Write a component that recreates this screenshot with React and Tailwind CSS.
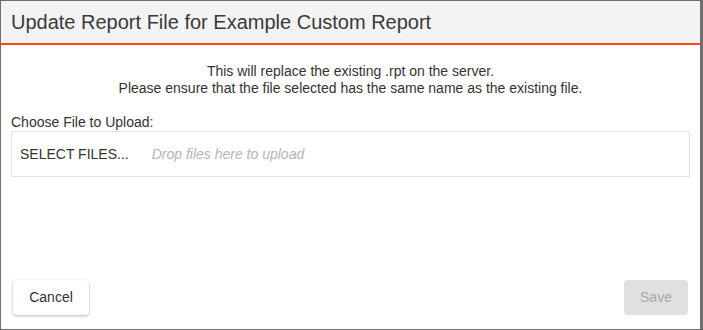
import React from "react";

export default function App() {
  return (
    <div className="h-[330px] w-[703px] bg-[#6f6f6f] pl-px pt-px font-['Liberation_Sans',Arial,sans-serif]">
      <div className="flex h-[328px] w-[699px] flex-col bg-white text-[#333]">
        {/* header */}
        <div className="flex h-[44px] items-center border-b-2 border-[#ff4a0c] bg-[#f3f3f3] px-[10px]">
          <h1 className="text-[20px] leading-none text-[#3a3a3a]">Update Report File for Example Custom Report</h1>
        </div>

        {/* body */}
        <div className="flex flex-1 flex-col px-[10px]">
          <div className="mt-[18px] text-center text-[14px] leading-[17px] text-[#333]">
            <p>This will replace the existing .rpt on the server.</p>
            <p>Please ensure that the file selected has the same name as the existing file.</p>
          </div>
          <label className="mt-[17px] text-[14px] leading-[17px] text-[#333]">Choose File to Upload:</label>
          <div className="flex h-[46px] items-center border border-[#e2e2e2] px-[8px]">
            <span className="text-[14px] text-[#333]">SELECT FILES...</span>
            <span className="ml-[23px] text-[14px] italic text-[#b5b5b5]">Drop files here to upload</span>
          </div>
        </div>

        {/* footer */}
        <div className="flex items-center justify-between px-[12px] pb-[14px]">
          <button className="h-[35px] w-[76px] rounded-[4px] bg-white text-[14px] text-[#333] shadow-[0_1px_3px_rgba(0,0,0,0.3)]">
            Cancel
          </button>
          <button disabled className="h-[35px] w-[64px] rounded-[4px] bg-[#e0e0e0] text-[14px] text-[#a8a8a8]">
            Save
          </button>
        </div>
      </div>
    </div>
  );
}
